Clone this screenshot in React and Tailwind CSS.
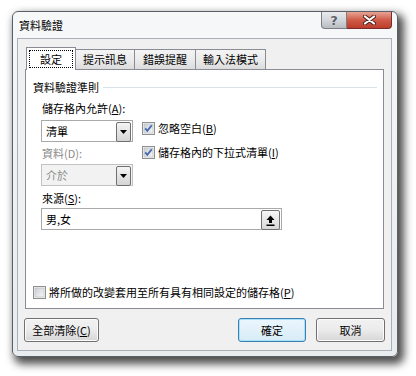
import React from "react";

const F = { fontFamily: '"Noto Sans CJK TC", "Noto Sans", sans-serif' };

function Check({ checked }) {
  return (
    <svg width="13" height="13" viewBox="0 0 13 13" className="shrink-0">
      <defs>
        <linearGradient id={checked ? "cbg1" : "cbg0"} x1="0" y1="0" x2="1" y2="1">
          <stop offset="0" stopColor="#cbcfd5" />
          <stop offset="1" stopColor="#f6f6f6" />
        </linearGradient>
      </defs>
      <rect x="0.5" y="0.5" width="12" height="12" fill="#f4f4f4" stroke="#8e8f8f" />
      <rect x="2" y="2" width="9" height="9" fill={`url(#${checked ? "cbg1" : "cbg0"})`} stroke="#b5b8bd" strokeWidth="0.6" />
      {checked && (
        <path d="M3.2 6.4 L5.3 8.8 L9.8 3.2" fill="none" stroke="#4468b0" strokeWidth="1.8" />
      )}
    </svg>
  );
}

function DropBtn() {
  return (
    <div className="w-[15px] h-[20px] mt-px mr-px ml-auto border border-[#707070] rounded-[2px] bg-gradient-to-b from-[#f4f4f4] to-[#d4d4d4] flex items-center justify-center">
      <svg width="7" height="4" viewBox="0 0 7 4">
        <path d="M0 0 H7 L3.5 4 Z" fill="#000" />
      </svg>
    </div>
  );
}

function Combo({ text, disabled }) {
  return (
    <div
      className={`w-[92px] h-[22px] border flex items-start ${
        disabled ? "border-[#c2c2c2] bg-[#f2f2f2]" : "border-[#a9a9a9] bg-white"
      }`}
    >
      <span className={`pl-[4px] leading-[20px] text-[11px] ${disabled ? "text-[#8a8a8a]" : "text-black"}`}>
        {text}
      </span>
      <DropBtn />
    </div>
  );
}

function Btn({ children, w, def }) {
  return (
    <div
      className={`h-[24px] rounded-[3px] border flex items-center justify-center text-[11px] text-black ${
        def
          ? "border-[#3c7fb1] bg-gradient-to-b from-[#eaf6fd] to-[#d7ecf7] shadow-[inset_0_0_0_1px_#a8e0f8]"
          : "border-[#707070] bg-gradient-to-b from-[#f2f2f2] via-[#ebebeb] to-[#d6d6d6] shadow-[inset_0_0_0_1px_#fcfcfc]"
      }`}
      style={{ width: w }}
    >
      {children}
    </div>
  );
}

export default function App() {
  return (
    <div className="w-[416px] h-[376px] bg-white overflow-hidden" style={F}>
      <div className="ml-[12px] mt-[11px] w-[386px] h-[346px] rounded-[6px] border border-[#5b5f66] bg-gradient-to-b from-[#f7f8f9] via-[#eef0f2] to-[#e9ecef] shadow-[4px_5px_9px_2px_rgba(0,0,0,0.7)] flex flex-col pl-[4px] pr-[5px] pb-[5px]">
        {/* title bar */}
        <div className="h-[26px] flex items-start shrink-0">
          <div className="pl-[2px] pt-[6px] text-[11px] leading-[14px] text-black">資料驗證</div>
          <div className="ml-auto flex">
            <div className="w-[26px] h-[17px] rounded-bl-[4px] border border-t-0 border-[#7a7f86] bg-gradient-to-b from-[#e8eaec] via-[#d3d6da] to-[#b9bdc2] flex items-center justify-center">
              <span className="text-[13px] font-bold leading-none text-[#5a5f66]" style={{ fontFamily: '"DejaVu Sans", sans-serif', textShadow: "0 0 1px #fff" }}>?</span>
            </div>
            <div className="w-[45px] h-[17px] rounded-br-[4px] border border-l-0 border-t-0 border-[#7a2b2b] bg-gradient-to-b from-[#e8a395] via-[#cf5a47] to-[#bd3c2c] flex items-center justify-center">
              <svg width="13" height="10" viewBox="0 0 13 10">
                <path d="M2 1.5 L11 8.5 M11 1.5 L2 8.5" stroke="#4a2222" strokeWidth="4" strokeLinecap="round" />
                <path d="M2 1.5 L11 8.5 M11 1.5 L2 8.5" stroke="#ffffff" strokeWidth="2.2" strokeLinecap="round" />
              </svg>
            </div>
          </div>
        </div>

        {/* client area */}
        <div className="flex-1 border border-[#a9b0b8] bg-[#f0f0f0] flex flex-col px-[7px] pt-[8px] pb-[8px] text-[11px] text-black">
          {/* tabs */}
          <div className="h-[22px] flex items-end pl-px relative z-10 shrink-0">
            <div className="w-[50px] h-[23px] -mb-px bg-white border border-b-0 border-[#898c95] flex items-start justify-center pt-[2px]">
              <div className="w-[44px] h-[18px] border border-dotted border-black flex items-center justify-center leading-none">
                設定
              </div>
            </div>
            <div className="w-[60px] h-[20px] -ml-px border border-b-0 border-[#898c95] bg-gradient-to-b from-[#f4f4f4] via-[#ebebeb] to-[#dcdcdc] flex items-center justify-center leading-none">
              提示訊息
            </div>
            <div className="w-[62px] h-[20px] -ml-px border border-b-0 border-[#898c95] bg-gradient-to-b from-[#f4f4f4] via-[#ebebeb] to-[#dcdcdc] flex items-center justify-center leading-none">
              錯誤提醒
            </div>
            <div className="w-[71px] h-[20px] -ml-px border border-b-0 border-[#898c95] bg-gradient-to-b from-[#f4f4f4] via-[#ebebeb] to-[#dcdcdc] flex items-center justify-center leading-none">
              輸入法模式
            </div>
          </div>

          {/* panel */}
          <div className="h-[240px] shrink-0 border border-[#898c95] bg-white flex flex-col">
            <div className="mt-[9px] h-[16px] flex items-center pl-[7px] pr-[6px]">
              <span className="leading-[14px]">資料驗證準則</span>
              <div className="flex-1 ml-[4px] h-px bg-[#d9e1e8]" />
            </div>
            <div className="mt-[6px] h-[14px] leading-[14px] pl-[16px]">
              儲存格內允許(<span className="underline">A</span>):
            </div>
            <div className="mt-[5px] flex pl-[15px]">
              <div className="flex flex-col">
                <Combo text="清單" />
                <div className="mt-[4px] h-[14px] leading-[14px] pl-px text-[#8a8a8a]">資料(D):</div>
                <div className="mt-[4px]">
                  <Combo text="介於" disabled />
                </div>
              </div>
              <div className="ml-[9px] flex flex-col">
                <div className="mt-px h-[14px] flex items-center gap-[3px]">
                  <Check checked />
                  <span className="leading-[14px]">
                    忽略空白(<span className="underline">B</span>)
                  </span>
                </div>
                <div className="mt-[10px] h-[14px] flex items-center gap-[3px]">
                  <Check checked />
                  <span className="leading-[14px]">
                    儲存格內的下拉式清單(<span className="underline">I</span>)
                  </span>
                </div>
              </div>
            </div>
            <div className="mt-[5px] h-[14px] leading-[14px] pl-[16px]">
              來源(<span className="underline">S</span>):
            </div>
            <div className="mt-[3px] ml-[15px] w-[241px] h-[22px] border border-[#a9a9a9] flex items-start">
              <span className="pl-[4px] leading-[20px]">男,女</span>
              <div className="ml-auto mt-px mr-px w-[19px] h-[20px] border border-[#707070] rounded-[2px] bg-gradient-to-b from-[#f6f6f6] to-[#d8d8d8] flex items-center justify-center">
                <svg width="9" height="11" viewBox="0 0 9 11">
                  <path d="M4.5 0.5 L8.5 5 H6 V8 H3 V5 H0.5 Z" fill="#000" />
                  <rect x="0.5" y="9.5" width="8" height="1.5" fill="#000" />
                </svg>
              </div>
            </div>
            <div className="mt-auto mb-[9px] pl-[7px] h-[14px] flex items-center gap-[3px]">
              <Check checked={false} />
              <span className="leading-[14px]">
                將所做的改變套用至所有具有相同設定的儲存格(<span className="underline">P</span>)
              </span>
            </div>
          </div>

          {/* buttons */}
          <div className="mt-[9px] -mx-px flex justify-between">
            <Btn w={75}>
              <span>
                全部清除(<span className="underline">C</span>)
              </span>
            </Btn>
            <div className="flex gap-[10px]">
              <Btn w={68} def>
                確定
              </Btn>
              <Btn w={69}>取消</Btn>
            </div>
          </div>
        </div>
      </div>
    </div>
  );
}
